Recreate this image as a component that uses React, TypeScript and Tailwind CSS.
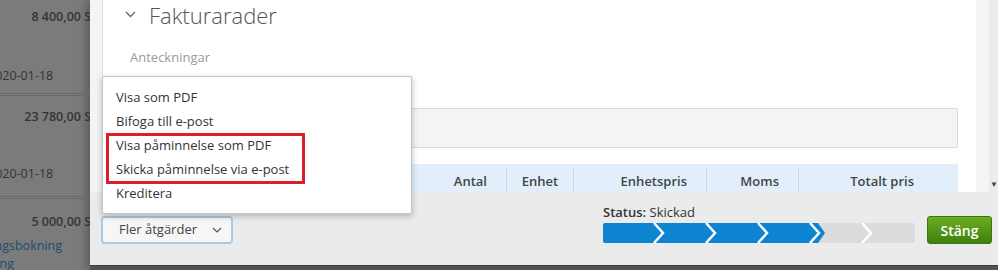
import React from "react";

const menuItems = [
  "Visa som PDF",
  "Bifoga till e-post",
  "Visa påminnelse som PDF",
  "Skicka påminnelse via e-post",
  "Kreditera",
];

// backdrop list rows (dimmed under the modal)
const Backdrop: React.FC = () => (
  <div className="w-[90px] h-full shrink-0 overflow-hidden bg-[#7b7b7b] text-[12.5px] text-[#353535]">
    <div className="h-[96px] border-b-[3px] border-double border-[#6a6a6a] relative">
      <div className="absolute right-[-16px] top-[8px] font-semibold whitespace-nowrap">8 400,00 SEK</div>
      <div className="absolute left-[-12px] top-[67px] whitespace-nowrap">2020-01-18</div>
    </div>
    <div className="h-[103px] border-b-[3px] border-double border-[#6a6a6a] relative">
      <div className="absolute right-[-16px] top-[12px] font-semibold whitespace-nowrap">23 780,00 SEK</div>
      <div className="absolute left-[-12px] top-[69px] whitespace-nowrap">2020-01-18</div>
    </div>
    <div className="relative">
      <div className="absolute right-[-16px] top-[14px] font-semibold whitespace-nowrap">5 000,00 SEK</div>
      <div className="absolute right-[28px] top-[38px] whitespace-nowrap text-[#1e4a72]">Betalningsbokning</div>
      <div className="absolute right-[76px] top-[56px] whitespace-nowrap text-[#1e4a72]">Bokning</div>
    </div>
  </div>
);

const ProgressBar: React.FC = () => {
  const segW = 52;
  const done = 4;
  const total = 6;
  return (
    <svg width="312" height="20" viewBox="0 0 312 20">
      <rect x="0" y="0" width="312" height="20" rx="2" fill="#dcdcdc" />
      <path d={`M2 0 H${done * segW + 7} L${done * segW + 14} 10 L${done * segW + 7} 20 H2 a2 2 0 0 1 -2 -2 V2 a2 2 0 0 1 2 -2 Z`} fill="#0c84d0" />
      {Array.from({ length: total - 1 }).map((_, i) => {
        const x = (i + 1) * segW;
        return (
          <polyline
            key={i}
            points={`${x - 1},0 ${x + 8},10 ${x - 1},20`}
            fill="none"
            stroke="#ffffff"
            strokeWidth="2.5"
          />
        );
      })}
    </svg>
  );
};

export default function App() {
  return (
    <div
      className="relative w-[998px] h-[270px] flex overflow-hidden bg-[#7b7b7b]"
      style={{ fontFamily: '"Open Sans", "Noto Sans", sans-serif' }}
    >
      <Backdrop />

      {/* modal */}
      <div className="flex-1 flex flex-col shadow-[-4px_0_8px_rgba(0,0,0,0.25)]">
        <div className="h-[192px] flex bg-[#f4f4f4] overflow-hidden">
          <div className="w-[12px] shrink-0" />
          <div className="w-[874px] shrink-0 bg-white border-l border-[#e2e2e2] pl-[18px] pr-[18px]">
            <div className="h-[30px] flex items-center pl-[4px]">
              <svg width="11" height="7" viewBox="0 0 11 7" className="mt-[-2px]">
                <path d="M1 1 L5.5 5.5 L10 1" fill="none" stroke="#666" strokeWidth="1.3" />
              </svg>
              <span className="ml-[13px] text-[22px] font-light text-[#555] leading-[30px]">Fakturarader</span>
            </div>
            <div className="mt-[18px] pl-[9px] text-[13px] text-[#9a9a9a]">Anteckningar</div>
            <div className="mt-[40px] h-[40px] bg-[#f4f4f4] border border-[#dcdcdc] rounded-[2px]" />
            <div className="mt-[16px] h-[36px] bg-[#e2effa] flex text-[13px] font-semibold text-[#454545]">
              <div className="w-[320px] flex items-center pl-[12px]">Benämning</div>
              <div className="w-[66px] flex items-center justify-end pr-[19px] border-r border-[#c4dbee] my-[4px]">Antal</div>
              <div className="w-[67px] flex items-center justify-center border-r border-[#c4dbee] my-[4px]">Enhet</div>
              <div className="w-[133px] flex items-center justify-end pr-[19px] border-r border-[#c4dbee] my-[4px]">Enhetspris</div>
              <div className="w-[92px] flex items-center justify-end pr-[19px] border-r border-[#c4dbee] my-[4px]">Moms</div>
              <div className="flex-1 flex items-center justify-end pr-[44px]">Totalt pris</div>
            </div>
          </div>
          <div className="w-[13px] shrink-0 bg-[#f5f5f5]" />
          <div className="flex-1 bg-[#ececec] relative">
            <span className="absolute right-[0px] top-[180px] text-[8px] leading-none text-[#444]">▼</span>
          </div>
        </div>

        {/* footer */}
        <div className="h-[73px] bg-[#ebebeb] flex items-start pl-[11px] pr-[6px]">
          <button className="mt-[24px] w-[132px] h-[28px] flex items-center pl-[16px] bg-[#f6f6f6] border-2 border-[#a8cbe6] rounded-[4px] text-[13px] text-[#444]">
            Fler åtgärder
            <svg width="10" height="6" viewBox="0 0 10 6" className="ml-[15px]">
              <path d="M1 1 L5 5 L9 1" fill="none" stroke="#555" strokeWidth="1.2" />
            </svg>
          </button>
          <div className="flex-1" />
          <div className="mt-[11px] flex flex-col">
            <div className="text-[13px] text-[#333] leading-[18px]">
              <span className="font-semibold">Status:</span> Skickad
            </div>
            <div className="mt-[2px]">
              <ProgressBar />
            </div>
          </div>
          <button className="mt-[24px] ml-[12px] w-[65px] h-[28px] rounded-[3px] border border-[#3b780c] bg-gradient-to-b from-[#6cad22] to-[#3f800c] text-white text-[14px] font-semibold">
            Stäng
          </button>
        </div>
        <div className="flex-1 bg-[#525252] border-t border-[#3c3c3c]" />
      </div>

      {/* dropdown menu */}
      <div className="absolute left-[102px] top-[76px] w-[310px] h-[138px] bg-white border border-[#c4c4c4] rounded-[2px] shadow-[0_2px_6px_rgba(0,0,0,0.25)] pt-[9px]">
        {menuItems.map((item) => (
          <div key={item} className="h-[24px] flex items-center pl-[13px] text-[13px] text-[#333]">
            {item}
          </div>
        ))}
        <div className="absolute left-[3px] top-[56px] w-[199px] h-[51px] border-[3px] border-[#dc1f2b]" />
      </div>
    </div>
  );
}
